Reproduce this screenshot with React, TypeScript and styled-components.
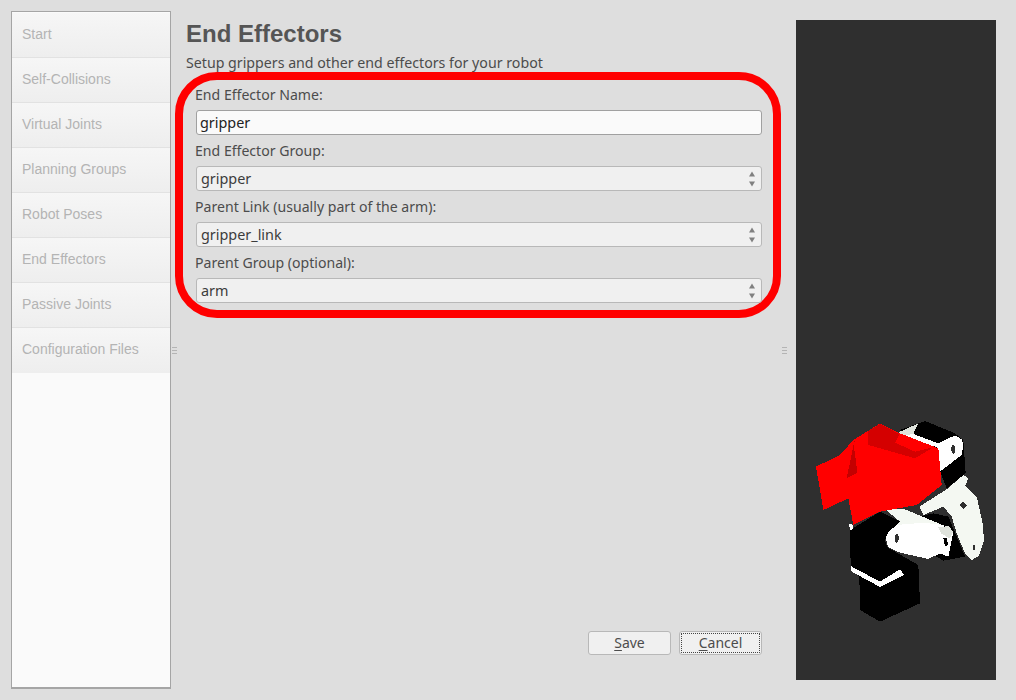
import React from 'react';
import styled, { createGlobalStyle } from 'styled-components';

const steps = [
  'Start',
  'Self-Collisions',
  'Virtual Joints',
  'Planning Groups',
  'Robot Poses',
  'End Effectors',
  'Passive Joints',
  'Configuration Files',
];

const selects = [
  { label: 'End Effector Group:', value: 'gripper' },
  { label: 'Parent Link (usually part of the arm):', value: 'gripper_link' },
  { label: 'Parent Group (optional):', value: 'arm' },
];

function SpinArrows() {
  return (
    <svg width="6" height="16" viewBox="0 0 6 16">
      <polygon points="3,0.5 6,5.5 0,5.5" fill="#808080" />
      <polygon points="0,10.5 6,10.5 3,15.5" fill="#808080" />
    </svg>
  );
}

// roughly traced from the reference, coords are 3x the screen pixels
function RobotModel() {
  return (
    <svg width="200" height="220" viewBox="0 0 600 660" shapeRendering="crispEdges">
      <polygon points="300,60 375,33 465,70 490,90 497,190 440,235 420,185" fill="#000" />
      <polygon points="298,66 355,40 340,72 300,78" fill="#dfe3dc" />
      <polygon points="340,72 415,100 465,76 485,88 490,105 485,135 420,185 412,112 300,78" fill="#fff" />
      <ellipse cx="460" cy="118" rx="6" ry="13" fill="#2f2f2f" />
      <polygon points="355,320 400,310 445,320 495,440 430,452 400,435" fill="#000" />
      <polygon points="358,290 440,238 490,195 505,205 495,228 530,260 548,340 552,390 537,438 515,450 495,430 470,370 455,320 430,290 370,315" fill="#f4f8f2" />
      <polygon points="480,285 490,275 502,287 490,297" fill="#2f2f2f" />
      <ellipse cx="522" cy="412" rx="4" ry="9" fill="#2f2f2f" />
      <polygon points="150,360 240,305 300,335 255,390 262,412 355,465 360,580 240,635 180,600 178,500 152,470" fill="#000" />
      <polygon points="258,300 310,296 435,348 290,345 300,335" fill="#f4f8f2" />
      <polygon points="257,385 265,365 290,345 370,338 425,345 460,365 445,440 420,430 385,447 300,428 265,412" fill="#fff" />
      <polygon points="415,352 445,348 460,365 450,385 425,372" fill="#dfe3dc" />
      <ellipse cx="290" cy="385" rx="6" ry="13" fill="#2f2f2f" />
      <polygon points="430,385 440,385 445,405 435,410" fill="#000" />
      <polygon points="152,468 240,515 300,478 312,495 240,531 155,485" fill="#fff" />
      <polygon points="147,340 160,345 157,360 150,360" fill="#fff" />
      <polygon points="160,90 240,40 300,70 415,115 425,225 350,285 240,305 160,345 145,265 70,300 48,170 120,135" fill="#f00" />
      <polygon points="205,62 240,42 298,72 285,98 345,125 400,112 345,145 205,105" fill="#d40000" />
      <polygon points="165,85 140,205 172,188 162,110" fill="#c40000" />
    </svg>
  );
}

export default function App() {
  return (
    <>
      <GlobalStyle />
      <Page>
        <Sidebar>
          {steps.map((step) => (
            <NavItem key={step}>{step}</NavItem>
          ))}
        </Sidebar>
        <Splitter $width={4}>
          <Grip />
        </Splitter>
        <Main>
          <Heading>End Effectors</Heading>
          <Subtitle>Setup grippers and other end effectors for your robot</Subtitle>
          <FormFrame>
            <Field>
              <Label>End Effector Name:</Label>
              <TextInput defaultValue="gripper" />
            </Field>
            {selects.map((item) => (
              <Field key={item.label}>
                <Label>{item.label}</Label>
                <ComboBox>
                  <span>{item.value}</span>
                  <SpinArrows />
                </ComboBox>
              </Field>
            ))}
          </FormFrame>
          <ButtonRow>
            <Button>
              <ButtonText>
                <u>S</u>ave
              </ButtonText>
            </Button>
            <Button $focused>
              <ButtonText>
                <u>C</u>ancel
              </ButtonText>
            </Button>
          </ButtonRow>
        </Main>
        <Splitter $width={15}>
          <Grip />
        </Splitter>
        <Viewer>
          <RobotModel />
        </Viewer>
      </Page>
    </>
  );
}

const GlobalStyle = createGlobalStyle`
  html, body {
    margin: 0;
    padding: 0;
    background: #dedede;
    font-family: 'Noto Sans', sans-serif;
  }
  * {
    box-sizing: border-box;
  }
`;

const Page = styled.div`
  width: 1016px;
  height: 700px;
  display: flex;
  overflow: hidden;
  background: #dedede;
`;

const Sidebar = styled.nav`
  width: 160px;
  height: 678px;
  margin: 11px 0 0 11px;
  padding-top: 1px;
  flex-shrink: 0;
  background: #fafafa;
  border: 1px solid #a5a5a5;
  border-width: 1px 1px 2px 1px;
`;

const NavItem = styled.div`
  height: 45px;
  padding: 0 0 2px 10px;
  display: flex;
  align-items: center;
  font-family: 'Liberation Sans', sans-serif;
  font-size: 14px;
  color: #b4b4b4;
  background: linear-gradient(180deg, #f6f6f6, #eeeeee);
  border-bottom: 1px solid #e2e2e2;

  &:last-child {
    border-bottom-color: #eeeeee;
  }
`;

const Splitter = styled.div<{ $width: number }>`
  flex-shrink: 0;
  width: ${(p) => p.$width}px;
  display: flex;
  align-items: center;
  padding-left: 1px;
`;

const Grip = styled.div`
  width: 5px;
  height: 7px;
  flex-shrink: 0;
  background: repeating-linear-gradient(180deg, #b4b4b4 0 1px, transparent 1px 3px);
`;

const Main = styled.main`
  width: 606px;
  flex-shrink: 0;
  height: 700px;
  padding-bottom: 45px;
  display: flex;
  flex-direction: column;
`;

const Heading = styled.h1`
  margin: 20px 0 0 11px;
  height: 28px;
  line-height: 28px;
  font-family: 'Liberation Sans', sans-serif;
  font-size: 24px;
  font-weight: 700;
  color: #555555;
`;

const Subtitle = styled.p`
  margin: 5px 0 0 11px;
  height: 19px;
  line-height: 19px;
  font-size: 14.2px;
  color: #4c4c4c;
`;

const FormFrame = styled.section`
  height: 246px;
  padding: 4px 11px 0 12px;
  display: flex;
  flex-direction: column;
  gap: 5px;
  border: 8px solid #ff0000;
  border-radius: 42px;
`;

const Field = styled.div`
  display: flex;
  flex-direction: column;
`;

const Label = styled.label`
  height: 20px;
  line-height: 22px;
  margin-bottom: 6px;
  font-size: 14.1px;
  color: #4c4c4c;
`;

const TextInput = styled.input`
  width: 566px;
  height: 25px;
  margin-left: 1px;
  padding: 0 3px;
  border: 1px solid #a0a0a0;
  border-radius: 3px;
  background: #fafafa;
  font-family: 'Noto Sans', sans-serif;
  font-size: 14.4px;
  color: #222222;
  outline: none;
`;

const ComboBox = styled.div`
  width: 566px;
  height: 25px;
  margin-left: 1px;
  padding: 0 6px 0 4px;
  display: flex;
  align-items: center;
  justify-content: space-between;
  border: 1px solid #b8b8b8;
  border-radius: 3px;
  background: #f0f0f0;
  font-size: 14.4px;
  color: #3c3c3c;
`;

const ButtonRow = styled.div`
  margin-top: auto;
  padding-right: 19px;
  display: flex;
  justify-content: flex-end;
  gap: 8px;
`;

const Button = styled.button<{ $focused?: boolean }>`
  width: 83px;
  height: 24px;
  padding: 0 0 2px;
  border: 1px solid #b8b8b8;
  border-radius: 3px;
  background: #f0f0f0;
  font-family: 'Noto Sans', sans-serif;
  font-size: 14px;
  color: #4c4c4c;
  outline: ${(p) => (p.$focused ? '1px dotted #444444' : 'none')};
  outline-offset: -3px;
`;

const ButtonText = styled.span`
  u {
    text-underline-offset: 2px;
  }
`;

const Viewer = styled.aside`
  width: 200px;
  height: 660px;
  margin-top: 20px;
  flex-shrink: 0;
  padding: 390px 0 0 4px;
  background: #2f2f2f;
`;
